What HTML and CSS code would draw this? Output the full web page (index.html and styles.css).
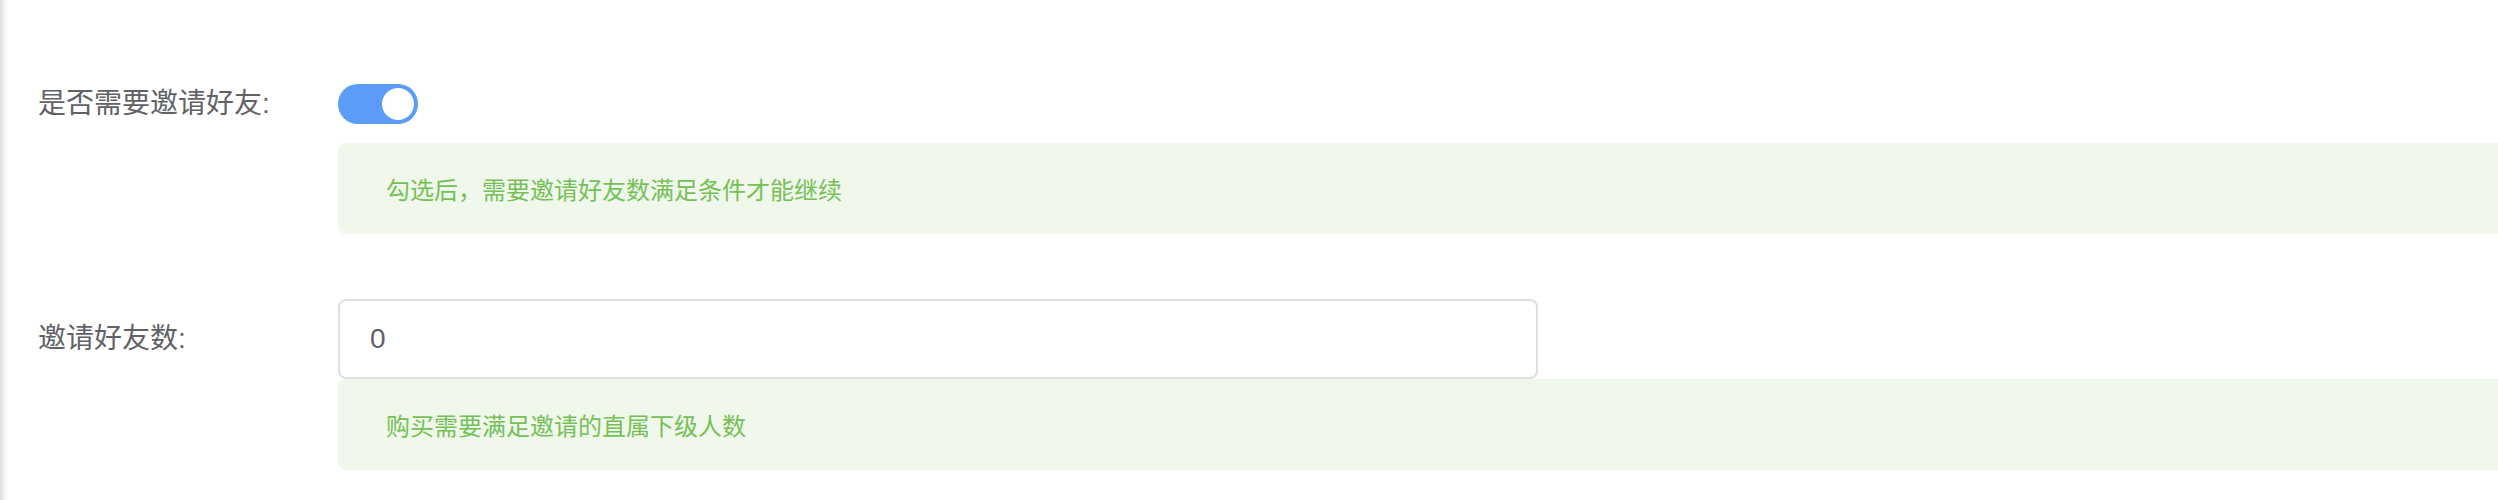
FILE: index.html
```html
<!DOCTYPE html>
<html lang="zh-CN">
<head>
<meta charset="utf-8">
<title>邀请好友设置</title>
<link rel="stylesheet" href="styles.css">
</head>
<body>
<div class="page">
  <form class="form">
    <div class="form-item">
      <label class="form-label">是否需要邀请好友:</label>
      <div class="form-content">
        <div class="control">
          <span class="switch is-on"><span class="switch-knob"></span></span>
        </div>
        <div class="tip">勾选后，需要邀请好友数满足条件才能继续</div>
      </div>
    </div>
    <div class="form-item">
      <label class="form-label">邀请好友数:</label>
      <div class="form-content">
        <div class="control">
          <div class="input">0</div>
        </div>
        <div class="tip tip-attached">购买需要满足邀请的直属下级人数</div>
      </div>
    </div>
  </form>
</div>
</body>
</html>
```
FILE: styles.css
```css
html, body {
  margin: 0;
  padding: 0;
  background: #fff;
  overflow: hidden;
}

.page {
  min-height: 500px;
  box-sizing: border-box;
  padding: 64px 0 0 38px;
  background: linear-gradient(to right, #dedee3 0, #e8e8ec 2px, #f6f6f8 5px, #ffffff 8px);
  font-family: "Liberation Sans", "Noto Sans CJK SC", sans-serif;
}

.form {
  display: flex;
  flex-direction: column;
  gap: 65px;
}

.form-item {
  display: flex;
  align-items: flex-start;
}

.form-label {
  width: 300px;
  flex: none;
  font-size: 28px;
  line-height: 80px;
  color: #606266;
}

.form-content {
  flex: 1;
  display: flex;
  flex-direction: column;
}

.control {
  height: 80px;
  display: flex;
  align-items: center;
}

.switch {
  width: 80px;
  height: 40px;
  border-radius: 20px;
  background: #5b9cf8;
  display: flex;
  align-items: center;
  justify-content: flex-end;
  padding: 0 4px;
  box-sizing: border-box;
}

.switch-knob {
  width: 32px;
  height: 32px;
  border-radius: 50%;
  background: #fff;
}

.input {
  width: 1200px;
  height: 80px;
  box-sizing: border-box;
  border: 2px solid #dcdfe6;
  border-radius: 8px;
  padding: 0 30px;
  font-size: 28px;
  line-height: 76px;
  color: #606266;
}

.tip {
  margin-top: -1px;
  height: 91px;
  box-sizing: border-box;
  padding: 0 48px;
  display: flex;
  align-items: center;
  background: #f0f7eb;
  border-radius: 8px 0 0 8px;
  color: #76c157;
  font-size: 24px;
  font-family: "Noto Sans CJK SC", sans-serif;
}

.tip-attached {
  margin-top: 0;
}
```
